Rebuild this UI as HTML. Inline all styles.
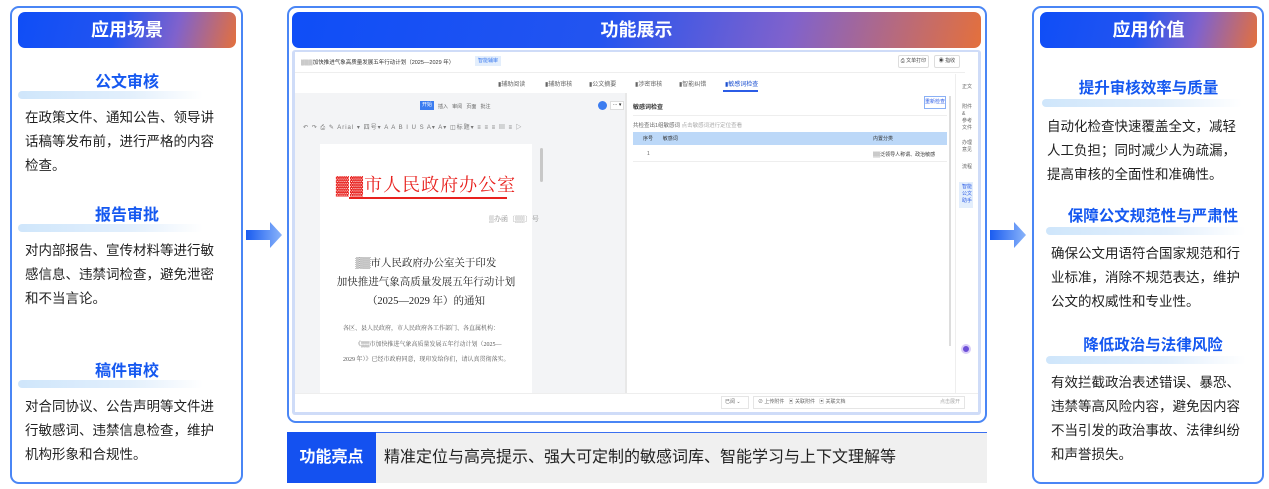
<!DOCTYPE html>
<html><head><meta charset="utf-8"><style>
*{margin:0;padding:0;box-sizing:border-box}
body{width:1269px;height:489px;background:#fff;position:relative;overflow:hidden;font-family:"Liberation Sans","Noto Sans CJK SC",sans-serif;color:#222}
.a{position:absolute}
.panel{position:absolute;border:2px solid #4a86f5;border-radius:9px;background:#fff}
.hdr{position:absolute;height:36px;border-radius:7px;background:linear-gradient(105deg,#0f4ef7 0%,#2354f0 45%,#8062cc 72%,#e4703c 100%);color:#fff;font-weight:bold;font-size:18px;text-align:center;line-height:36px}
.st{position:absolute;color:#1558f0;font-weight:bold;font-size:16px;text-align:center}
.bar{position:absolute;height:8px;border-radius:4px;background:linear-gradient(90deg,#cfe6fb,#e2effc 60%,rgba(255,255,255,0))}
.tx{position:absolute;font-size:13.5px;line-height:24px;color:#222}
.arrow{position:absolute;width:36px;height:26px}
.s{font-size:6px;color:#666;position:absolute;white-space:nowrap}
.serif{font-family:'Liberation Serif','Noto Serif CJK SC',serif}
</style></head><body>

<div class="panel" style="left:10px;top:6px;width:233px;height:478px"></div>
<div class="hdr" style="left:18px;top:12px;width:218px">应用场景</div>
<div class="st" style="left:18px;top:68px;width:218px">公文审核</div>
<div class="bar" style="left:18px;top:91px;width:185px"></div>
<div class="tx" style="left:25px;top:106px;width:200px">在政策文件、通知公告、领导讲话稿等发布前，进行严格的内容检查。</div>
<div class="st" style="left:18px;top:201px;width:218px">报告审批</div>
<div class="bar" style="left:18px;top:224px;width:185px"></div>
<div class="tx" style="left:25px;top:239px;width:200px">对内部报告、宣传材料等进行敏感信息、违禁词检查，避免泄密和不当言论。</div>
<div class="st" style="left:18px;top:357px;width:218px">稿件审校</div>
<div class="bar" style="left:18px;top:380px;width:185px"></div>
<div class="tx" style="left:25px;top:395px;width:200px">对合同协议、公告声明等文件进行敏感词、违禁信息检查，维护机构形象和合规性。</div>

<svg class="arrow" style="left:246px;top:222px" viewBox="0 0 36 26"><defs><linearGradient id="g1"><stop offset="0" stop-color="#1a5cf0"/><stop offset="1" stop-color="#8ab4fa"/></linearGradient></defs><path d="M0 8H24V0L36 13L24 26V18H0Z" fill="url(#g1)"/></svg>
<svg class="arrow" style="left:990px;top:222px" viewBox="0 0 36 26"><defs><linearGradient id="g2"><stop offset="0" stop-color="#1a5cf0"/><stop offset="1" stop-color="#8ab4fa"/></linearGradient></defs><path d="M0 8H24V0L36 13L24 26V18H0Z" fill="url(#g2)"/></svg>

<div class="panel" style="left:287px;top:6px;width:700px;height:417px"></div>
<div class="hdr" style="left:292px;top:12px;width:689px">功能展示</div>
<div class="a" style="left:292px;top:50px;width:689px;height:365px;background:#cfdcf8;border-radius:3px"></div>
<div class="a" style="left:295px;top:52px;width:683px;height:360px;background:#fff">
  <div class="s" style="left:6px;top:6px;font-size:5.5px;color:#333">▒▒▒加快推进气象高质量发展五年行动计划（2025—2029 年）</div>
  <div class="a" style="left:180px;top:4px;width:26px;height:10px;background:#e3eefc;font-size:5px;color:#3a7af0;line-height:10px;text-align:center">智能辅审</div>
  <div class="a" style="left:603px;top:3px;width:31px;height:13px;border:1px solid #ddd;border-radius:2px;font-size:5px;line-height:11px;text-align:center;color:#444">⎙ 文单打印</div>
  <div class="a" style="left:639px;top:3px;width:26px;height:13px;border:1px solid #ddd;border-radius:2px;font-size:5px;line-height:11px;text-align:center;color:#444">◉ 指收</div>
  <div class="a" style="left:0;top:20px;width:670px;height:20px;background:#fff;border-top:1px solid #eee"></div>
  <div class="s" style="left:203px;top:27px">▮辅助阅读</div>
  <div class="s" style="left:250px;top:27px">▮辅助审核</div>
  <div class="s" style="left:294px;top:27px">▮公文摘要</div>
  <div class="s" style="left:340px;top:27px">▮涉密审核</div>
  <div class="s" style="left:384px;top:27px">▮智能纠错</div>
  <div class="s" style="left:430px;top:27px;color:#1a4fd0">▮敏感词检查</div>
  <div class="a" style="left:428px;top:38px;width:35px;height:2px;background:#2b5ce6"></div>
  <div class="a" style="left:0;top:41px;width:330px;height:300px;background:#f3f4f6"></div>
  <div class="a" style="left:125px;top:49px;width:14px;height:9px;background:#3b7cf0;font-size:5px;color:#fff;text-align:center;line-height:9px">开始</div>
  <div class="s" style="left:143px;top:51px;font-size:5px">插入 &nbsp; 审阅 &nbsp; 页面 &nbsp; 批注</div>
  <div class="a" style="left:303px;top:49px;width:9px;height:9px;border-radius:50%;background:#3b7cf0"></div>
  <div class="a" style="left:315px;top:49px;width:14px;height:9px;border:1px solid #ddd;background:#fff;font-size:5px;line-height:7px;text-align:center">··· ▾</div>
  <div class="s" style="left:8px;top:70px;font-size:6px;color:#777;letter-spacing:1px">↶ ↷ ⎙ ✎ Arial ▾ 四号▾ A A B I U S A▾ A▾ ◫标题▾ ≡ ≡ ≡ ▤ ≡ ▷</div>
  <div class="a" style="left:25px;top:92px;width:212px;height:250px;background:#fff"></div>
  <div class="a" style="left:245px;top:96px;width:3px;height:34px;background:#c8c8c8;border-radius:2px"></div>
  <div class="a serif" style="left:25px;top:122px;width:212px;text-align:center;color:#e8211e;font-size:18px;line-height:22px;letter-spacing:1px">▓▓市人民政府办公室</div>
  <div class="a" style="left:54px;top:145px;width:158px;height:2px;background:#e8211e"></div>
  <div class="s serif" style="left:194px;top:162px;color:#888;font-size:7px">▒办函〔▒▒〕号</div>
  <div class="a serif" style="left:25px;top:202px;width:212px;text-align:center;font-size:10.5px;line-height:19px;color:#222">▒▒市人民政府办公室关于印发<br>加快推进气象高质量发展五年行动计划<br>（2025—2029 年）的通知</div>
  <div class="s serif" style="left:48px;top:271px;font-size:6px;color:#555">各区、县人民政府，市人民政府各工作部门、各直属机构：</div>
  <div class="s serif" style="left:60px;top:287px;font-size:6px;color:#555">《▒▒市加快推进气象高质量发展五年行动计划（2025—</div>
  <div class="s serif" style="left:48px;top:302px;font-size:6px;color:#555">2029 年）》已经市政府同意，现印发给你们，请认真贯彻落实。</div>
  <div class="a" style="left:330px;top:41px;width:2px;height:300px;background:#e8e8e8"></div>
  <div class="s" style="left:338px;top:50px;font-weight:bold;color:#333">敏感词检查</div>
  <div class="a" style="left:629px;top:44px;width:22px;height:13px;border:1px solid #8ab0f5;font-size:5px;color:#2b5ce6;text-align:center;line-height:11px">重新检查</div>
  <div class="a" style="left:338px;top:63px;width:314px;height:1px;background:#eee"></div>
  <div class="s" style="left:338px;top:69px;font-size:5.5px">共检查出1组敏感词 <span style="color:#aaa">点击敏感词进行定位查看</span></div>
  <div class="a" style="left:338px;top:80px;width:314px;height:13px;background:#bcd8f8"></div>
  <div class="s" style="left:348px;top:83px;font-size:5px;color:#333">序号 &nbsp; &nbsp; &nbsp; 敏感词</div>
  <div class="s" style="left:578px;top:83px;font-size:5px;color:#333">内置分类</div>
  <div class="s" style="left:352px;top:99px;font-size:5px">1</div>
  <div class="s" style="left:578px;top:99px;font-size:5px;color:#333">▒▒泛领导人称谓、政治敏感</div>
  <div class="a" style="left:338px;top:109px;width:314px;height:1px;background:#eee"></div>
  <div class="a" style="left:654px;top:44px;width:2px;height:250px;background:#ddd"></div>
  <div class="a" style="left:660px;top:22px;width:23px;height:320px;background:#fff;border-left:1px solid #eee"></div>
  <div class="s" style="left:667px;top:32px;font-size:5px;line-height:7px">正文</div>
  <div class="s" style="left:667px;top:52px;font-size:5px;line-height:7px">附件<br>&amp;<br>参考<br>文件</div>
  <div class="s" style="left:667px;top:88px;font-size:5px;line-height:7px">办理<br>意见</div>
  <div class="s" style="left:667px;top:112px;font-size:5px;line-height:7px">流程</div>
  <div class="a" style="left:664px;top:130px;width:14px;height:26px;background:#e3eefc"></div>
  <div class="s" style="left:667px;top:132px;font-size:5px;line-height:7px;color:#2b5ce6">智能<br>公文<br>助手</div>
  <div class="a" style="left:666px;top:292px;width:10px;height:10px;border-radius:50%;background:#6d4fd8;border:2px solid #d8ccf7"></div>
  <div class="a" style="left:0;top:341px;width:683px;height:19px;background:#fff;border-top:1px solid #eee"></div>
  <div class="a" style="left:426px;top:344px;width:28px;height:13px;border:1px solid #e5e5e5;font-size:5px;line-height:11px;padding-left:3px;color:#666">已阅 ⌄</div>
  <div class="a" style="left:458px;top:344px;width:212px;height:13px;border:1px solid #e5e5e5;font-size:5px;line-height:11px;padding-left:4px;color:#666">⊘ 上传附件 &nbsp; ▣ 关联附件 &nbsp; ▣ 关联文档<span style="float:right;margin-right:4px;color:#aaa">点击展开</span></div>
</div>

<div class="a" style="left:287px;top:432px;width:700px;height:51px;background:#f0f0f0;border-top:1px solid #3a6ff0"></div>
<div class="a" style="left:287px;top:432px;width:89px;height:51px;background:#1451f0;color:#fff;font-weight:bold;font-size:16px;line-height:51px;text-align:center">功能亮点</div>
<div class="a" style="left:384px;top:432px;font-size:16px;line-height:51px;color:#222">精准定位与高亮提示、强大可定制的敏感词库、智能学习与上下文理解等</div>

<div class="panel" style="left:1032px;top:6px;width:232px;height:478px"></div>
<div class="hdr" style="left:1040px;top:12px;width:217px">应用价值</div>
<div class="st" style="left:1040px;top:76px;width:217px;font-size:15.5px">提升审核效率与质量</div>
<div class="bar" style="left:1042px;top:99px;width:200px"></div>
<div class="tx" style="left:1047px;top:115px;width:194px">自动化检查快速覆盖全文，减轻人工负担；同时减少人为疏漏，提高审核的全面性和准确性。</div>
<div class="st" style="left:1046px;top:204px;width:214px;font-size:15.5px">保障公文规范性与严肃性</div>
<div class="bar" style="left:1046px;top:227px;width:200px"></div>
<div class="tx" style="left:1051px;top:242px;width:194px">确保公文用语符合国家规范和行业标准，消除不规范表达，维护公文的权威性和专业性。</div>
<div class="st" style="left:1046px;top:333px;width:214px;font-size:15.5px">降低政治与法律风险</div>
<div class="bar" style="left:1046px;top:356px;width:200px"></div>
<div class="tx" style="left:1051px;top:371px;width:194px">有效拦截政治表述错误、暴恐、违禁等高风险内容，避免因内容不当引发的政治事故、法律纠纷和声誉损失。</div>

</body></html>
